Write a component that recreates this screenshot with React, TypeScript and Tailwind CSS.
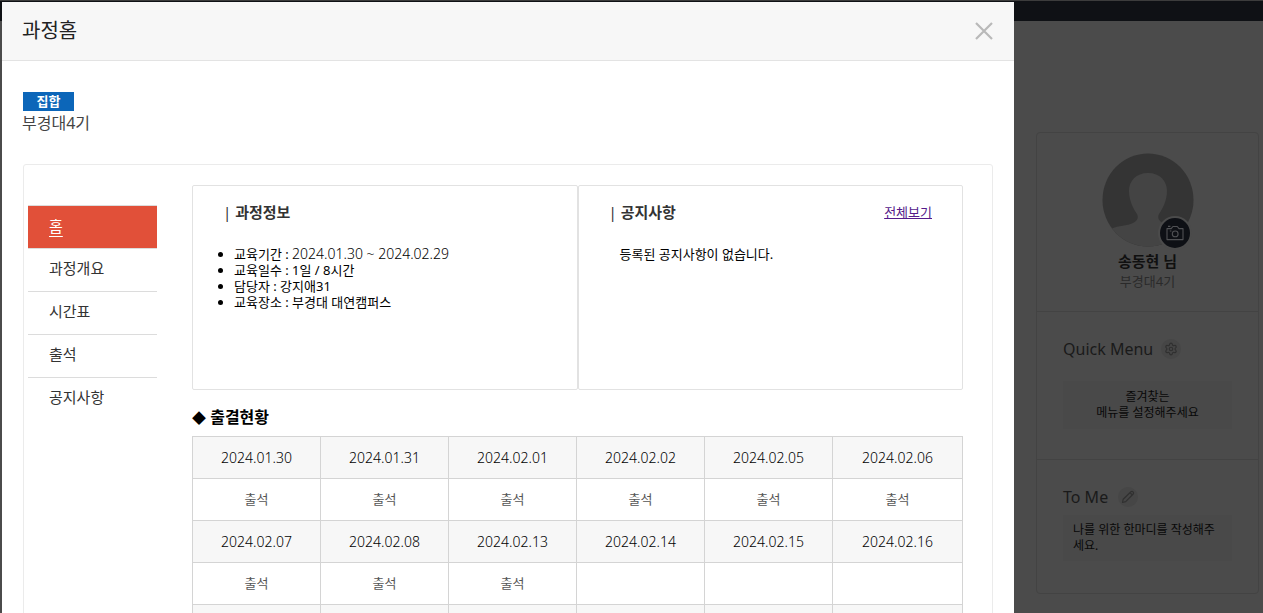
import React from "react";
import { Settings } from "lucide-react";

const menu = ["홈", "과정개요", "시간표", "출석", "공지사항"];

const attendance = [
  {
    dates: ["2024.01.30", "2024.01.31", "2024.02.01", "2024.02.02", "2024.02.05", "2024.02.06"],
    states: ["출석", "출석", "출석", "출석", "출석", "출석"],
  },
  {
    dates: ["2024.02.07", "2024.02.08", "2024.02.13", "2024.02.14", "2024.02.15", "2024.02.16"],
    states: ["출석", "출석", "출석", "", "", ""],
  },
  {
    dates: ["", "", "", "", "", ""],
    states: ["", "", "", "", "", ""],
  },
];

function Avatar() {
  return (
    <svg viewBox="0 0 92 94" className="h-[94px] w-[92px]" aria-hidden="true">
      <defs>
        <clipPath id="face">
          <ellipse cx="46" cy="47" rx="45.5" ry="46.5" />
        </clipPath>
      </defs>
      <g clipPath="url(#face)">
        <rect width="92" height="94" fill="#343434" />
        <path
          d="M46 20 C34 20 27 28 27 38 C27 47 31 55 35 61 C37 65 35 68 31 70 C25 73 17 72 9 76 L4 94 L88 94 L84 76 C76 72 67 73 61 70 C57 68 55 65 57 61 C61 55 65 47 65 38 C65 28 58 20 46 20 Z"
          fill="#444444"
        />
      </g>
    </svg>
  );
}

function CameraIcon() {
  return (
    <svg viewBox="0 0 18 16" className="h-4 w-[18px]" fill="none" stroke="#505154" strokeWidth="1.1" strokeLinejoin="round" aria-hidden="true">
      <path d="M1 3.6h4.2l1.7-2.1h4.4l1.7 2.1H17v11H1z" />
      <circle cx="9.2" cy="8.9" r="2.9" />
      <path d="M2 1.4h2.4M3.8 6h1.6" />
    </svg>
  );
}

function PencilIcon() {
  return (
    <svg viewBox="0 0 14 14" className="h-[14px] w-[14px]" fill="none" stroke="#303030" strokeWidth="1.2" strokeLinejoin="round" aria-hidden="true">
      <path d="M1.5 12.5l.7-3.3 7.7-7.500q1.200-.9 2.200.1t.1 2.200l-7.500 7.700zM9 2.700l2.300 2.300" />
    </svg>
  );
}

function ProfileCard() {
  return (
    <aside className="w-[223px] rounded-[4px] border border-[#434343] bg-[#4b4b4b]">
      <section className="flex h-[179px] flex-col items-center border-b border-[#434343] pt-5">
        <div className="relative">
          <Avatar />
          <button
            type="button"
            aria-label="사진 변경"
            className="absolute right-[2px] -bottom-[3px] flex h-[34px] w-[34px] items-center justify-center rounded-full border-2 border-[#4b4b4b] bg-[#0e1015]"
          >
            <CameraIcon />
          </button>
        </div>
        <strong className="mt-1 text-[15px] leading-5 font-bold text-[#101010]">송동현 님</strong>
        <span className="text-[13px] leading-5 text-[#2a2a2a]">부경대4기</span>
      </section>
      <section className="h-[148px] border-b border-[#434343] px-[26px] pt-[27px]">
        <div className="flex items-center gap-2">
          <h2 className="text-[16px] leading-5 font-normal text-[#1a1a1a]">Quick Menu</h2>
          <button type="button" aria-label="메뉴 설정" className="flex h-5 w-5 items-center justify-center rounded-full bg-[#464646]">
            <Settings size={14} strokeWidth={2} color="#303030" />
          </button>
        </div>
        <p className="mt-[22px] bg-[#494949] py-2 text-center text-[12px] leading-4 text-[#080808]">
          즐겨찾는
          <br />
          메뉴를 설정해주세요
        </p>
      </section>
      <section className="h-[133px] px-[26px] pt-[27px]">
        <div className="flex items-center gap-[10px]">
          <h2 className="text-[16px] leading-5 font-normal text-[#1a1a1a]">To Me</h2>
          <button type="button" aria-label="한마디 수정" className="flex h-5 w-5 items-center justify-center rounded-full bg-[#464646]">
            <PencilIcon />
          </button>
        </div>
        <p className="mt-2 h-[46px] bg-[#494949] px-[10px] py-[7px] text-[12px] leading-4 text-[#080808]">
          나를 위한 한마디를 작성해주세요.
        </p>
      </section>
    </aside>
  );
}

function CourseMenu() {
  return (
    <nav className="mt-5 w-[129px] shrink-0 border-t border-[#dcdcdc]">
      <ul>
        {menu.map((item, i) => (
          <li key={item} className="border-b border-[#dcdcdc] last:border-b-0">
            <a
              href="#"
              className={
                i === 0
                  ? "block h-[42px] bg-[#e15039] px-[21px] text-[15px] leading-[40px] text-white underline underline-offset-4"
                  : "block h-[42px] px-[21px] text-[15px] leading-[38px] text-[#333333]"
              }
            >
              {item}
            </a>
          </li>
        ))}
      </ul>
    </nav>
  );
}

function PanelTitle({ children }: { children: React.ReactNode }) {
  return (
    <h3 className="text-[15px] leading-6 font-bold text-[#333333]">
      <span className="font-normal">|</span> {children}
    </h3>
  );
}

function InfoPanels() {
  return (
    <div className="grid grid-cols-2">
      <section className="h-[205px] rounded-[2px] border border-[#e2e2e2] px-[30px] pt-[14px]">
        <PanelTitle>과정정보</PanelTitle>
        <ul className="mt-[22px] list-disc pl-[11px] text-[13px] leading-4 text-black">
          <li>
            교육기간 : <span className="text-[14px] font-light">2024.01.30 ~ 2024.02.29</span>
          </li>
          <li>교육일수 : 1일 / 8시간</li>
          <li>담당자 : 강지애31</li>
          <li>교육장소 : 부경대 대연캠퍼스</li>
        </ul>
      </section>
      <section className="h-[205px] rounded-[2px] border border-[#e2e2e2] px-[30px] pt-[14px]">
        <div className="flex items-center justify-between">
          <PanelTitle>공지사항</PanelTitle>
          <a href="#" className="text-[13px] leading-6 text-[#551a8b] underline">
            전체보기
          </a>
        </div>
        <p className="mt-[22px] pl-[11px] text-[13px] leading-4 text-black">등록된 공지사항이 없습니다.</p>
      </section>
    </div>
  );
}

function AttendanceTable() {
  return (
    <table className="w-full table-fixed border-collapse text-center" aria-labelledby="attendance-title">
      <colgroup>
        <col span={5} className="w-[128px]" />
        <col />
      </colgroup>
      <tbody>
        {attendance.map((week, i) => (
          <React.Fragment key={i}>
            <tr className="h-[42px] bg-[#f7f7f7]">
              {week.dates.map((d, j) => (
                <th key={j} scope="col" className="border border-[#d4d4d4] text-[14px] leading-5 font-light text-black">
                  {d}
                </th>
              ))}
            </tr>
            <tr className="h-[42px]">
              {week.states.map((s, j) => (
                <td key={j} className="border border-[#d4d4d4] pb-[2px] text-[13px] leading-5 text-[#555555]">
                  {s}
                </td>
              ))}
            </tr>
          </React.Fragment>
        ))}
      </tbody>
    </table>
  );
}

function CourseDialog() {
  return (
    <div className="absolute inset-0 overflow-hidden pt-[2px] pr-[249px] pl-[2px]">
      <div role="dialog" aria-labelledby="dialog-title" className="min-h-full bg-white">
        <header className="flex h-[59px] items-center justify-between border-b border-[#e3e3e3] bg-[#f7f7f7] px-5">
          <h1 id="dialog-title" className="text-[20px] leading-7 text-[#222222]">
            과정홈
          </h1>
          <button type="button" aria-label="닫기">
            <svg viewBox="0 0 20 20" className="h-5 w-5" fill="none" stroke="#b9b9b9" strokeWidth="2.2" aria-hidden="true">
              <path d="M2 2l16 16M18 2L2 18" />
            </svg>
          </button>
        </header>
        <div className="px-5 pt-[31px]">
          <span className="ml-px block h-[19px] w-[51px] bg-[#0c66b9] text-center text-[13px] leading-[19px] font-bold text-white">집합</span>
          <p className="text-[16px] leading-6 text-[#444444]">부경대4기</p>
          <div className="mx-px mt-[29px] flex gap-[35px] rounded-[3px] border border-[#ebebeb] py-5 pr-[29px] pl-1">
            <CourseMenu />
            <div className="min-w-0 flex-1">
              <InfoPanels />
              <h3 id="attendance-title" className="mt-[15px] mb-[6px] text-[16px] leading-6 font-bold text-black">
                <span className="text-[14px]">◆</span> 출결현황
              </h3>
              <AttendanceTable />
            </div>
          </div>
        </div>
      </div>
    </div>
  );
}

export default function App() {
  return (
    <div className="relative h-screen overflow-hidden bg-[#4b4b4b] font-['Noto_Sans','Noto_Sans_CJK_KR',sans-serif]">
      <div className="h-[21px] border-t border-[#3c3c3c] bg-[#0f1115]" />
      <div className="flex justify-end pt-[111px] pr-1">
        <ProfileCard />
      </div>
      <CourseDialog />
    </div>
  );
}
